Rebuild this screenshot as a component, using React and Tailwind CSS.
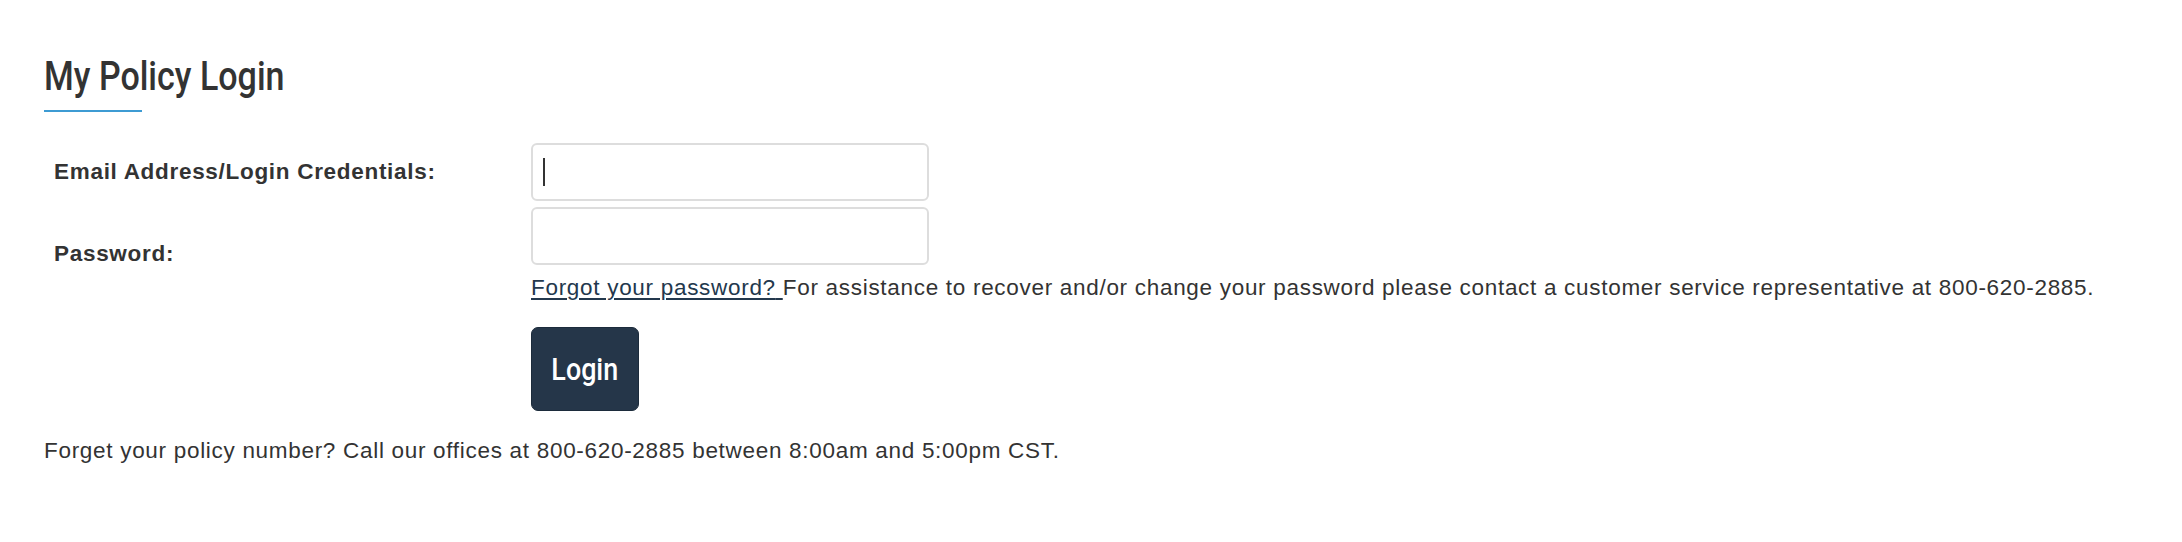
export default function App() {
  return (
    <div className="min-h-[542px] bg-white pl-[44px] pt-[52px] font-['Liberation_Sans',Arial,sans-serif] text-[#333]">
      {/* Heading */}
      <h1 className="font-['Roboto',sans-serif] text-[41px] leading-[48px] font-medium text-[#333]">
        <span className="inline-block origin-left scale-x-[0.83]">My Policy Login</span>
      </h1>
      <div className="mt-[10px] h-[2px] w-[98px] bg-[#3d9bd3]" />

      {/* Form */}
      <div className="mt-[31px] grid grid-cols-[487px_1fr] items-center gap-y-[6px] text-[22.5px] leading-[26px] tracking-[0.7px]">
        <label className="pl-[10px] font-bold">Email Address/Login Credentials:</label>
        <div className="flex h-[58px] w-[398px] items-center rounded-[6px] border-2 border-[#dddddd] bg-white pl-[10px]">
          <span className="block h-[28px] w-[2px] bg-[#333]" />
        </div>

        <label className="pl-[10px] font-bold">Password:</label>
        <div>
          <div className="h-[58px] w-[398px] rounded-[6px] border-2 border-[#dddddd] bg-white" />
          <p className="mt-[10px] whitespace-nowrap">
            <a href="#" className="text-[#23384d] underline decoration-[1.5px] underline-offset-[3px]">
              Forgot your password?{" "}
            </a>
            For assistance to recover and/or change your password please contact a customer service
            representative at 800-620-2885.
          </p>
        </div>

        <div />
        <div className="mt-[20px]">
          <button className="flex h-[84px] w-[108px] items-center justify-center rounded-[7px] border border-[#1c2b3b] bg-[#253649] font-['Roboto',sans-serif] text-[32px] font-medium tracking-normal text-white">
            <span className="inline-block scale-x-[0.84]">Login</span>
          </button>
        </div>
      </div>

      <p className="mt-[27px] text-[22.5px] leading-[26px] tracking-[0.7px]">
        Forget your policy number? Call our offices at 800-620-2885 between 8:00am and 5:00pm CST.
      </p>
    </div>
  );
}
